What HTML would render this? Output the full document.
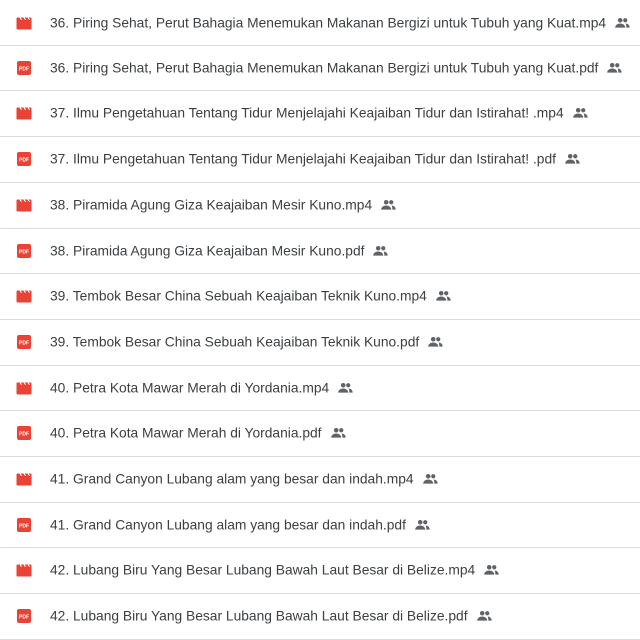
<!DOCTYPE html>
<html><head><style>
body{margin:0;width:640px;height:640px;overflow:hidden;background:#fff;font-family:"Liberation Sans",Arial,sans-serif;}
.row{position:absolute;left:0;width:640px;border-bottom:1px solid #dadce0;box-sizing:border-box;}
.ic{position:absolute;left:16px;top:50%;margin-top:-7px;width:16px;height:14px;}
.t{position:absolute;left:50px;font-size:13.8px;color:#3c4043;white-space:nowrap;display:flex;align-items:center;top:50%;transform:translateY(-50%);}
.sh{margin-left:9px;}
</style></head><body>
<div id="c"></div>
<script>
const names=["36. Piring Sehat, Perut Bahagia Menemukan Makanan Bergizi untuk Tubuh yang Kuat","37. Ilmu Pengetahuan Tentang Tidur Menjelajahi Keajaiban Tidur dan Istirahat! ","38. Piramida Agung Giza Keajaiban Mesir Kuno","39. Tembok Besar China Sebuah Keajaiban Teknik Kuno","40. Petra Kota Mawar Merah di Yordania","41. Grand Canyon Lubang alam yang besar dan indah","42. Lubang Biru Yang Besar Lubang Bawah Laut Besar di Belize"];
const vid='<svg class="ic" viewBox="0 0 16 14"><rect x="0.5" y="1.5" width="15" height="12" rx="1" fill="#ea4335"/><path d="M4 1.5l1.5 2.2M8 1.5l1.5 2.2M12 1.5l1.5 2.2" stroke="#fff" stroke-width="1.1"/></svg>';
const pdf='<svg class="ic" viewBox="0 0 16 14"><rect x="1" y="0" width="14" height="14" rx="2" fill="#ea4335"/><text x="8" y="9.3" font-size="5" font-family="Liberation Sans" font-weight="bold" fill="#fff" text-anchor="middle">PDF</text></svg>';
const sh='<svg class="sh" width="15" height="11" viewBox="0 0 16 12"><circle cx="5.5" cy="3" r="2.5" fill="#5f6368"/><circle cx="11" cy="3" r="2.3" fill="#5f6368"/><path d="M0 11c0-3 3-4.5 5.5-4.5S11 8 11 11z" fill="#5f6368"/><path d="M11.5 6.6c2 .2 4.3 1.3 4.3 4.4h-3.6c0-1.8-.3-3.2-.7-4.4z" fill="#5f6368"/></svg>';
let h='';let i=0;
names.forEach(n=>{["mp4","pdf"].forEach(e=>{const top=Math.round(i*45.7);
h+=`<div class="row" style="top:${top-1}px;height:${Math.round((i+1)*45.7)-top+1}px;border-top:${i==0?'1px solid #dadce0':'0'}">${e=="mp4"?vid:pdf}<div class="t">${n}.${e}${sh}</div></div>`;i++;});});
document.getElementById('c').innerHTML=h;
</script>
</body></html>
